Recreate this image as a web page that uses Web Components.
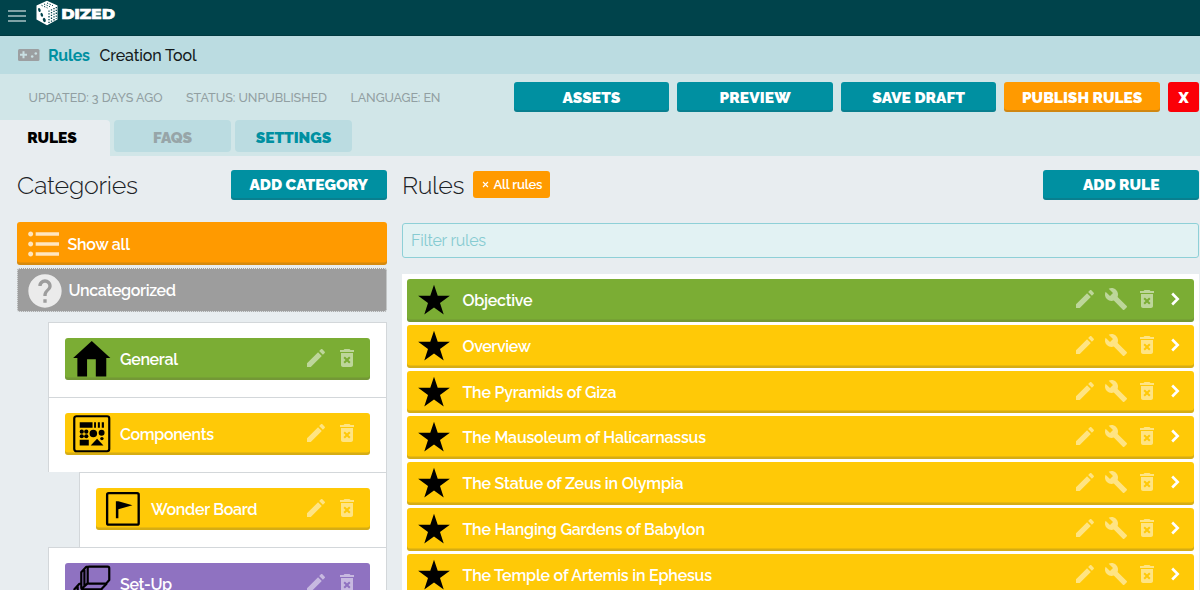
<!DOCTYPE html>
<html lang="en">
<head>
<meta charset="utf-8">
<title>Dized Rules Creation Tool</title>
<style>
  html, body {
    margin: 0;
    height: 590px;
    overflow: hidden;
  }
  body {
    background: #e8edf0;
    color: #1c2226;
    font-family: Raleway, Lato, "Open Sans", sans-serif;
    font-size: 16px;
  }
</style>
</head>
<body>
<top-bar></top-bar>
<tool-title></tool-title>
<tool-header></tool-header>
<main-area></main-area>

<script>
const ICONS = {
  edit: '<path d="M3 17.25V21h3.75L17.81 9.94l-3.75-3.75L3 17.25zM20.71 7.04c.39-.39.39-1.02 0-1.41l-2.34-2.34c-.39-.39-1.02-.39-1.41 0l-1.83 1.83 3.75 3.75 1.83-1.83z"/>',
  trash: '<path d="M6 19c0 1.1.9 2 2 2h8c1.1 0 2-.9 2-2V7H6v12zm2.46-7.12l1.41-1.41L12 12.59l2.12-2.12 1.41 1.41L13.41 14l2.12 2.12-1.41 1.41L12 15.41l-2.12 2.12-1.41-1.41L10.59 14l-2.13-2.12zM15.5 4l-1-1h-5l-1 1H5v2h14V4z"/>',
  build: '<path d="M22.7 19l-9.1-9.1c.9-2.3.4-5-1.5-6.9-2-2-5-2.4-7.4-1.3L9 6 6 9 1.6 4.7C.4 7.1.9 10.1 2.9 12.1c1.9 1.9 4.6 2.4 6.9 1.5l9.1 9.1c.4.4 1 .4 1.4 0l2.3-2.3c.5-.4.5-1.1.1-1.4z"/>',
  chevron: '<path d="M9.2 6.5l5.500 5.500-5.500 5.500" fill="none" stroke="currentColor" stroke-width="2.6"/>',
  help: '<path d="M12 2C6.48 2 2 6.48 2 12s4.48 10 10 10 10-4.48 10-10S17.52 2 12 2zm1 17h-2v-2h2v2zm2.07-7.75l-.9.92C13.45 12.9 13 13.5 13 15h-2v-.5c0-1.1.45-2.1 1.17-2.83l1.24-1.26c.37-.36.59-.86.59-1.41 0-1.1-.9-2-2-2s-2 .9-2 2H8c0-2.21 1.79-4 4-4s4 1.79 4 4c0 .88-.36 1.68-.93 2.25z"/>',
  list: '<path d="M4 10.5c-.83 0-1.5.67-1.5 1.5s.67 1.5 1.5 1.5 1.5-.67 1.5-1.5-.67-1.5-1.5-1.5zm0-6c-.83 0-1.5.67-1.5 1.5S3.170 7.500 4 7.500 5.500 6.830 5.500 6 4.830 4.500 4 4.500zm0 12c-.83 0-1.5.68-1.5 1.5s.68 1.5 1.5 1.5 1.5-.68 1.5-1.5-.67-1.5-1.5-1.5zM7 19h14v-2H7v2zm0-6h14v-2H7v2zm0-8v2h14V5H7z"/>',
  star: '<path d="M12 .5l2.800 8.400h9.100l-7.400 5.400 2.800 8.600L12 17.600l-7.300 5.300 2.800-8.600L.1 8.900h9.100z"/>',
  home: '<path d="M12 .6L.1 11.500h2.700V23.400h6.200V12.300h5.600v11.100h6.700V11.500h2.600z"/>',
  parts: `<rect x=".8" y=".8" width="22.4" height="22.4" rx="1.400" fill="none" stroke="currentColor" stroke-width="1.400"/>
    <path d="M4.300 4.600h8.200v3.500H4.300zM13.500 4.600h1.200v3.500h-1.200zM15.900 4.600h1.300v3.500h-1.300zM18.400 4.600h1.400v3.500h-1.400zM4.300 15.900h5.800v3.600H4.300zM11.300 19.500l4.100-4.300 4.100 4.300z"/>
    <circle cx="5.600" cy="10.700" r="1.350"/><circle cx="8.500" cy="10.700" r="1.350"/><circle cx="5.600" cy="13.600" r="1.350"/><circle cx="8.500" cy="13.600" r="1.350"/>
    <circle cx="13" cy="11.900" r="2.400"/><circle cx="18.300" cy="11.400" r="1.900"/><circle cx="18.500" cy="15.100" r="1.100"/>`,
  flag: `<rect x="2" y="2" width="20.200" height="20.200" rx="1" fill="none" stroke="currentColor" stroke-width="1.500"/>
    <path d="M7.600 7.200h1.600l9 2.500-9 2.600v5.700H7.600z"/>`,
  boxes: `<g fill="none" stroke="currentColor" stroke-width="1.400" stroke-linejoin="round">
    <path d="M10.300 1h11.900q1 0 1 1v7.600l-2 2.300H10.300q-.9 0-.9-.9V2q0-1 .9-1z"/>
    <path d="M9.700 1.200H8.400L5.300 4.600v9.900q0 1 1 1h11.800l3.500-3.600M9.500 11.600l-3.900 3.600M7.300 3v10.400"/>
    <path d="M5.300 12H4.100L.9 15.500v8M3 13.800v10M18.100 15.500v8"/></g>`
};

// Inline SVG icon, sized with the size attribute
class AppIcon extends HTMLElement {
  constructor() {
    super();
    this.attachShadow({ mode: "open" });
  }

  connectedCallback() {
    const size = this.getAttribute("size") || 24;
    this.shadowRoot.innerHTML = `
    <style>
      :host { display: block; flex: none; width: ${size}px; height: ${size}px; }
      svg { display: block; fill: currentColor; }
    </style>
    <svg viewBox="0 0 24 24" width="${size}" height="${size}">${ICONS[this.getAttribute("name")]}</svg>`;
  }
}
customElements.define("app-icon", AppIcon);

// Single line of text, tracked to the given measure in px
class TextLine extends HTMLElement {
  constructor() {
    super();
    this.attachShadow({ mode: "open" });
    this.shadowRoot.innerHTML = `
    <style>
      :host { display: block; flex: none; white-space: nowrap; }
      span { display: inline-block; }
    </style>
    <span><slot></slot></span>`;
  }

  connectedCallback() {
    const measure = parseFloat(this.getAttribute("measure"));
    const count = this.getAttribute("chars") || this.textContent.trim().length;
    if (!measure || count < 2) return;
    const span = this.shadowRoot.querySelector("span");
    const gap = (measure - span.getBoundingClientRect().width) / (count - 1);
    span.style.letterSpacing = gap + "px";
    span.style.marginRight = -gap + "px";
  }
}
customElements.define("text-line", TextLine);

class PushButton extends HTMLElement {
  constructor() {
    super();
    this.attachShadow({ mode: "open" });
  }

  connectedCallback() {
    this.shadowRoot.innerHTML = `
    <style>
      :host {
        display: flex;
        flex: none;
        align-items: center;
        justify-content: center;
        box-sizing: border-box;
        width: 155.6px;
        height: 30px;
        border-radius: 3px;
        background: #0090a1;
        box-shadow: inset 0 -2px 0 rgba(40, 70, 80, .22);
        color: #fff;
        font-size: 15.5px;
        font-weight: 900;
      }
      :host([kind="publish"]) { background: #ff9a00; }
      :host([kind="close"]) { background: #fb0007; width: 31px; box-shadow: none; }
    </style>
    <text-line measure="${this.getAttribute("measure")}" chars="${this.textContent.length}"><slot></slot></text-line>`;
  }
}
customElements.define("push-button", PushButton);

class TopBar extends HTMLElement {
  constructor() {
    super();
    this.attachShadow({ mode: "open" });
    this.shadowRoot.innerHTML = `
    <style>
      :host {
        display: flex;
        align-items: flex-start;
        box-sizing: border-box;
        height: 36px;
        padding-left: 8px;
        background: #00434b;
        border-bottom: 1px solid #003940;
        color: #fff;
      }
      .menu { display: grid; gap: 3px; width: 18px; margin: 10px 10px 0 0; }
      .menu i { height: 2px; background: #7fa2a6; }
      .cube { display: block; margin-right: 2.500px; }
      .name {
        margin-top: 5px;
        font: bold 14.500px/18px "DejaVu Sans", sans-serif;
        -webkit-text-stroke: .7px #fff;
        transform: scaleX(1.14);
        transform-origin: left;
      }
    </style>
    <div class="menu"><i></i><i></i><i></i></div>
    <svg class="cube" width="22" height="26" viewBox="0 0 22 26">
      <path d="M11 .8L21.500 5.500v14L11 25.300.5 19.500v-14z" fill="#fff"/>
      <g fill="#00434b">
        <ellipse cx="3.400" cy="10" rx="1.200" ry="2" transform="rotate(-20 3.400 10)"/>
        <ellipse cx="8.300" cy="20" rx="1.400" ry="2.200" transform="rotate(-20 8.300 20)"/>
        <ellipse cx="5.800" cy="14.800" rx="1.200" ry="2" transform="rotate(-20 5.800 14.800)"/>
      </g>
      <g stroke="#00434b" stroke-width="1.300" stroke-dasharray="1.300 1.500" fill="none">
        <path d="M13 10.500v13M15.500 9.200v13M18 7.900v13M20.300 7v12"/>
        <path d="M8 4l6 2.700M11 3l6 2.700M5.500 5.300l6 2.700" stroke-width="1"/>
      </g>
      <path d="M1 5.800l10 4.500 10-4.500M11.300 10v15" stroke="#fff" stroke-width=".8" fill="none"/>
    </svg>
    <text-line class="name" measure="54.500">DIZED</text-line>`;
  }
}
customElements.define("top-bar", TopBar);

class ToolTitle extends HTMLElement {
  constructor() {
    super();
    this.attachShadow({ mode: "open" });
    this.shadowRoot.innerHTML = `
    <style>
      :host {
        display: flex;
        align-items: center;
        box-sizing: border-box;
        height: 38px;
        padding-left: 18px;
        background: #bbdce1;
        font-size: 16px;
      }
      svg { margin-right: 8px; }
      .rules { color: #0090a1; font-weight: 700; margin-right: 9.500px; }
      .tool { color: #14191b; font-weight: 500; }
    </style>
    <svg width="22" height="12" viewBox="0 0 22 12">
      <rect width="21.500" height="12" rx="1.500" fill="#9c9fa1"/>
      <path d="M4.500 2.300h2v2.500H9v2H6.500v2.500h-2V6.800H2v-2h2.500z" fill="#c9e0e3"/>
      <circle cx="14.200" cy="7.500" r="1.300" fill="#c9e0e3"/>
      <circle cx="17.800" cy="4.500" r="1.300" fill="#c9e0e3"/>
    </svg>
    <text-line class="rules" measure="42">Rules</text-line>
    <text-line class="tool" measure="97">Creation Tool</text-line>`;
  }
}
customElements.define("tool-title", ToolTitle);

class TabItem extends HTMLElement {
  constructor() {
    super();
    this.attachShadow({ mode: "open" });
  }

  connectedCallback() {
    this.shadowRoot.innerHTML = `
    <style>
      :host {
        display: flex;
        align-items: center;
        justify-content: center;
        box-sizing: border-box;
        width: 117px;
        height: 32px;
        padding-top: 3px;
        border-radius: 4px;
        background: #bbdce1;
        color: #0090a1;
        font-size: 15.500px;
        font-weight: 900;
      }
      :host([state="off"]) { color: #97a5a8; }
      :host([state="active"]) {
        width: 110px;
        height: 36px;
        padding: 0 6px 1px 0;
        border-radius: 0 4px 0 0;
        background: #e8edf0;
        color: #000;
      }
    </style>
    <text-line measure="${this.getAttribute("measure")}" chars="${this.textContent.length}"><slot></slot></text-line>`;
  }
}
customElements.define("tab-item", TabItem);

class ToolHeader extends HTMLElement {
  constructor() {
    super();
    this.attachShadow({ mode: "open" });
    this.shadowRoot.innerHTML = `
    <style>
      :host {
        display: flex;
        flex-direction: column;
        justify-content: space-between;
        box-sizing: border-box;
        height: 82px;
        background: #d1e6e8;
      }
      .info {
        display: flex;
        align-items: center;
        height: 30px;
        padding: 8px 1px 0 28.500px;
        color: #919fa2;
        font-size: 12.500px;
        font-weight: 500;
      }
      .info text-line { margin-right: 23.500px; }
      .actions { display: flex; gap: 8px; margin-left: auto; }
      .tabs { display: flex; gap: 4px; }
    </style>
    <div class="info">
      <text-line measure="134">UPDATED: 3 DAYS AGO</text-line>
      <text-line measure="141">STATUS: UNPUBLISHED</text-line>
      <text-line measure="90">LANGUAGE: EN</text-line>
      <div class="actions">
        <push-button measure="58">ASSETS</push-button>
        <push-button measure="71">PREVIEW</push-button>
        <push-button measure="92.500">SAVE DRAFT</push-button>
        <push-button measure="120.500" kind="publish">PUBLISH RULES</push-button>
        <push-button kind="close">X</push-button>
      </div>
    </div>
    <div class="tabs">
      <tab-item state="active" measure="49.500">RULES</tab-item>
      <tab-item state="off" measure="39">FAQS</tab-item>
      <tab-item measure="75.500">SETTINGS</tab-item>
    </div>`;
  }
}
customElements.define("tool-header", ToolHeader);

// Coloured bar of a category: icon, name and optional tools
class CategoryBar extends HTMLElement {
  constructor() {
    super();
    this.attachShadow({ mode: "open" });
  }

  connectedCallback() {
    const tools = this.hasAttribute("tools")
      ? '<app-icon class="tool edit" name="edit"></app-icon><app-icon class="tool" name="trash"></app-icon>'
      : "";
    this.shadowRoot.innerHTML = `
    <style>
      :host {
        display: flex;
        align-items: center;
        box-sizing: border-box;
        height: 42.500px;
        padding: 0 11px 0 8.500px;
        border-radius: 3px;
        background: #ffc907;
        box-shadow: inset 0 -2.500px 0 rgba(90, 90, 60, .25);
        color: #fff;
        font-size: 16px;
        font-weight: 600;
      }
      :host([tone="green"]) { background: #7bad34; }
      :host([tone="purple"]) { background: #8f72c1; }
      :host([tone="orange"]) { background: #ff9a00; padding: 2px 0 0 7px; }
      :host([tone="grey"]) {
        height: 44px;
        margin-top: 3.500px;
        padding: 1px 0 0 7px;
        background: #9d9d9d;
        border: 1px dotted #e8edf0;
        box-shadow: none;
      }
      .sign { color: #000; margin-right: 9.500px; }
      :host([tone="orange"]) .sign { color: rgba(255, 255, 255, .75); margin-right: 3.500px; }
      :host([tone="grey"]) .sign { color: rgba(255, 255, 255, .8); margin-right: 3.500px; }
      .name { margin-right: auto; }
      .tool { color: rgba(255, 255, 255, .5); margin-top: -3px; }
      .edit { margin-right: 7.500px; }
    </style>
    <app-icon class="sign" name="${this.getAttribute("icon")}" size="${this.getAttribute("size") || 37.5}"></app-icon>
    <text-line class="name" measure="${this.getAttribute("measure")}" chars="${this.textContent.length}"><slot></slot></text-line>
    ${tools}`;
  }
}
customElements.define("category-bar", CategoryBar);

class CategoryTree extends HTMLElement {
  constructor() {
    super();
    this.attachShadow({ mode: "open" });
    this.shadowRoot.innerHTML = `
    <style>
      :host { display: block; margin: 9.500px 0 0 31px; }
      .node {
        box-sizing: border-box;
        height: 75px;
        padding: 15.300px 15.500px 0;
        background: #fff;
        border: solid #d3d7da;
        border-width: 1px 1px 0 1px;
      }
      .child { margin-left: 31px; }
    </style>
    <div class="node"><category-bar tools tone="green" icon="home" measure="58">General</category-bar></div>
    <div class="node"><category-bar tools icon="parts" measure="94">Components</category-bar></div>
    <div class="node child"><category-bar tools icon="flag" measure="106.500">Wonder Board</category-bar></div>
    <div class="node"><category-bar tools tone="purple" icon="boxes" measure="52">Set-Up</category-bar></div>`;
  }
}
customElements.define("category-tree", CategoryTree);

class RuleRow extends HTMLElement {
  constructor() {
    super();
    this.attachShadow({ mode: "open" });
  }

  connectedCallback() {
    this.shadowRoot.innerHTML = `
    <style>
      :host {
        display: flex;
        align-items: center;
        box-sizing: border-box;
        height: 42.750px;
        padding: .6px 7px 0 11px;
        border-radius: 3px;
        background: #ffc907;
        box-shadow: inset 0 -2.500px 0 rgba(90, 90, 60, .25);
        color: #fff;
        font-size: 16px;
        font-weight: 600;
      }
      :host([tone="green"]) { background: #7bad34; }
      .star { color: #000; margin: -1px 12.500px 0 0; }
      .name { margin-right: auto; }
      .tool { color: rgba(255, 255, 255, .5); margin: -3px 7px 0 0; }
      .next { margin: -3px 0 0 -3px; }
    </style>
    <app-icon class="star" name="star" size="32"></app-icon>
    <text-line class="name" measure="${this.getAttribute("measure")}" chars="${this.textContent.length}"><slot></slot></text-line>
    <app-icon class="tool" name="edit"></app-icon>
    <app-icon class="tool" name="build"></app-icon>
    <app-icon class="tool" name="trash"></app-icon>
    <app-icon class="next" name="chevron"></app-icon>`;
  }
}
customElements.define("rule-row", RuleRow);

class MainArea extends HTMLElement {
  constructor() {
    super();
    this.attachShadow({ mode: "open" });
    this.shadowRoot.innerHTML = `
    <style>
      :host {
        display: grid;
        grid-template-columns: 369.500px 797px;
        gap: 15.500px;
        padding: 13.500px 0 0 17px;
      }
      .head { display: flex; align-items: center; height: 30px; margin-bottom: 23px; }
      .categories .head { margin-bottom: 22.500px; }
      .head push-button { margin-left: auto; }
      .title { font-size: 25px; font-weight: 300; color: #1c2226; }
      .chip {
        display: flex;
        align-items: center;
        box-sizing: border-box;
        height: 27px;
        margin-left: 8px;
        padding: 0 7.500px 0 9px;
        gap: 5px;
        border-radius: 3px;
        background: #ff9a00;
        color: #fff;
        font-size: 13px;
        font-weight: 600;
      }
      .chip svg { flex: none; }
      .filter {
        display: flex;
        align-items: center;
        box-sizing: border-box;
        height: 35.500px;
        padding-left: 8px;
        border: 1px solid #8ed0d7;
        border-radius: 3px;
        background: #e2f2f3;
        color: #86cbd1;
        font-size: 16px;
      }
      .list {
        display: grid;
        gap: 3px;
        margin-top: 16px;
        padding: 5px;
        background: #fff;
      }
    </style>
    <section class="categories">
      <div class="head">
        <text-line class="title" measure="121">Categories</text-line>
        <push-button measure="118.500">ADD CATEGORY</push-button>
      </div>
      <category-bar tone="orange" icon="list" size="40" measure="62.500">Show all</category-bar>
      <category-bar tone="grey" icon="help" size="40" measure="107.500">Uncategorized</category-bar>
      <category-tree></category-tree>
    </section>
    <section>
      <div class="head">
        <text-line class="title" measure="62.500">Rules</text-line>
        <div class="chip">
          <svg width="7" height="7" viewBox="0 0 7 7"><path d="M1 1l5 5M6 1L1 6" stroke="#fff" stroke-width="1.100"/></svg>
          <text-line measure="49">All rules</text-line>
        </div>
        <push-button measure="76.500">ADD RULE</push-button>
      </div>
      <div class="filter"><text-line measure="75">Filter rules</text-line></div>
      <div class="list">
        <rule-row tone="green" measure="70">Objective</rule-row>
        <rule-row measure="68.500">Overview</rule-row>
        <rule-row measure="154">The Pyramids of Giza</rule-row>
        <rule-row measure="243.500">The Mausoleum of Halicarnassus</rule-row>
        <rule-row measure="221">The Statue of Zeus in Olympia</rule-row>
        <rule-row measure="242.500">The Hanging Gardens of Babylon</rule-row>
        <rule-row measure="249.500">The Temple of Artemis in Ephesus</rule-row>
      </div>
    </section>`;
  }
}
customElements.define("main-area", MainArea);
</script>
</body>
</html>
